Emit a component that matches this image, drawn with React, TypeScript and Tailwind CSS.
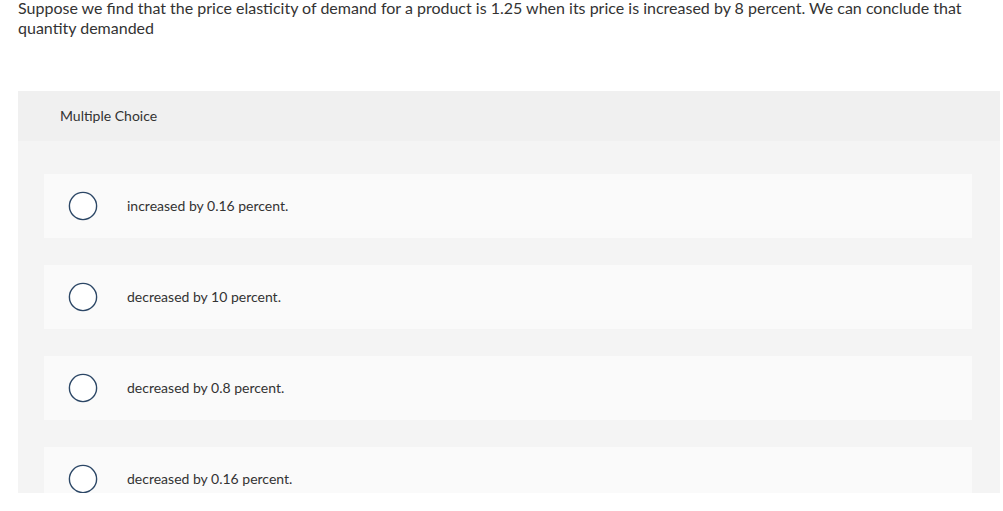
import React from "react";

const options = [
  "increased by 0.16 percent.",
  "decreased by 10 percent.",
  "decreased by 0.8 percent.",
  "decreased by 0.16 percent.",
];

function Radio() {
  return (
    <svg width="30" height="30" viewBox="0 0 30 30" className="shrink-0">
      <circle cx="15" cy="15" r="13.6" fill="#ffffff" stroke="#2c4766" strokeWidth="1.4" />
    </svg>
  );
}

export default function App() {
  return (
    <div
      className="w-[1003px] h-[511px] bg-white overflow-hidden text-[#333333]"
      style={{ fontFamily: "Lato, 'Open Sans', sans-serif" }}
    >
      <p className="pl-[18px] pr-[30px] -mt-[2px] text-[16px] leading-[20px]">
        Suppose we find that the price elasticity of demand for a product is 1.25 when its price is increased by 8 percent. We can conclude that quantity demanded
      </p>
      <div className="mt-[53px] ml-[18px] mr-[3px] h-[402px] overflow-hidden">
        <div className="h-[50px] bg-[#f0f0f0] flex items-center pl-[42px] pb-[2px] text-[14px]">
          Multiple Choice
        </div>
        <div className="bg-[#f4f4f4] pl-[26px] pr-[28px] pt-[33px] pb-[30px] flex flex-col gap-[27px]">
          {options.map((o) => (
            <div key={o} className="h-[64px] bg-[#fafafa] flex items-center pl-[24px]">
              <Radio />
              <span className="ml-[29px] mb-[2px] text-[14px]">{o}</span>
            </div>
          ))}
        </div>
      </div>
    </div>
  );
}
